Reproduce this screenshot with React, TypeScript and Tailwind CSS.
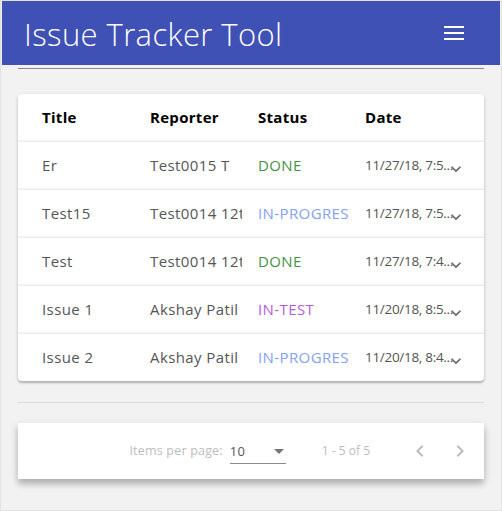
import React from "react";

const rows = [
  { title: "Er", reporter: "Test0015 T", status: "DONE", date: "11/27/18, 7:5..." },
  { title: "Test15", reporter: "Test0014 12test", status: "IN-PROGRESS", date: "11/27/18, 7:5..." },
  { title: "Test", reporter: "Test0014 12test", status: "DONE", date: "11/27/18, 7:4..." },
  { title: "Issue 1", reporter: "Akshay Patil", status: "IN-TEST", date: "11/20/18, 8:5..." },
  { title: "Issue 2", reporter: "Akshay Patil", status: "IN-PROGRESS", date: "11/20/18, 8:4..." },
];

function statusClass(s: string) {
  if (s === "DONE") return "text-[#449444]";
  if (s === "IN-TEST") return "text-[#b15ddb]";
  return "text-[#86a2f2]";
}

function Chevron() {
  return (
    <svg width="20" height="20" viewBox="0 0 24 24" className="shrink-0 mt-[7px]">
      <path d="M7.41 8.59 12 13.17l4.59-4.58L18 10l-6 6-6-6z" fill="#666" />
    </svg>
  );
}

export default function App() {
  return (
    <div
      className="w-[502px] h-[511px] bg-[#f2f2f2] border border-[#e2e2e2] pl-[1px] pr-[1px] overflow-hidden"
      style={{ fontFamily: "'Open Sans', 'DejaVu Sans', sans-serif" }}
    >
      <div className="h-[64px] bg-[#3f51b5] flex items-center justify-between pl-[22px] pr-[36px]">
        <span className="text-white text-[31px] font-light leading-none tracking-[0.4px] mt-[2px]">Issue Tracker Tool</span>
        <svg width="20" height="14" viewBox="0 0 20 14">
          <rect x="0" y="0" width="20" height="2" fill="#fff" />
          <rect x="0" y="6" width="20" height="2" fill="#fff" />
          <rect x="0" y="12" width="20" height="2" fill="#fff" />
        </svg>
      </div>
      <div className="mx-[16px] mt-[3px] h-[1px] bg-[#8a8a8a]" />
      <div className="mx-[16px] mt-[25px] bg-white rounded-[4px] shadow-[0_2px_2px_rgba(0,0,0,0.2),0_1px_4px_rgba(0,0,0,0.12)]">
        <div className="h-[47px] flex items-center pl-[24px] text-[15px] tracking-[0.3px] font-bold text-black">
          <div className="w-[108px]">Title</div>
          <div className="w-[108px]">Reporter</div>
          <div className="w-[107px]">Status</div>
          <div className="w-[100px]">Date</div>
        </div>
        {rows.map((r, i) => (
          <div
            key={i}
            className="h-[48px] flex items-center pl-[24px] pr-[18px] text-[15px] tracking-[0.4px] border-t border-[#ececec] shadow-[0_-1px_1px_rgba(0,0,0,0.04)]"
          >
            <div className="w-[108px] shrink-0 text-[#555] whitespace-nowrap overflow-hidden">{r.title}</div>
            <div className="w-[92px] shrink-0 mr-[16px] text-[#555] whitespace-nowrap overflow-hidden">{r.reporter}</div>
            <div className="w-[91px] shrink-0 mr-[16px] whitespace-nowrap overflow-hidden">
              <span className={statusClass(r.status)}>{r.status}</span>
            </div>
            <div className="flex-1 min-w-0 text-[#555] whitespace-nowrap tracking-[-0.3px] text-[13.5px]">{r.date}</div>
            <Chevron />
          </div>
        ))}
      </div>
      <div className="mx-[16px] mt-[21px] h-[1px] bg-[#dcdcdc]" />
      <div className="mx-[16px] mt-[20px] h-[56px] bg-white shadow-[0_5px_6px_rgba(0,0,0,0.2),0_3px_10px_rgba(0,0,0,0.12)] flex items-center justify-end pr-[12px] text-[12.5px] tracking-[0.2px] text-[#bdbdbd]">
        <span className="mr-[7px]">Items per page:</span>
        <div className="w-[56px] h-[24px] border-b border-[#8a8a8a] flex items-center justify-between mt-[2px]">
          <span className="text-[#555] text-[13px]">10</span>
          <svg width="10" height="5" viewBox="0 0 10 5" className="mr-[2px]">
            <path d="M0 0 L10 0 L5 5 Z" fill="#777" />
          </svg>
        </div>
        <span className="ml-[36px] mr-[38px] text-[12px] tracking-[0px]">1 - 5 of 5</span>
        <svg width="24" height="24" viewBox="0 0 24 24" className="mr-[16px]">
          <path d="M15.41 7.41 14 6l-6 6 6 6 1.41-1.41L10.83 12z" fill="#bdbdbd" />
        </svg>
        <svg width="24" height="24" viewBox="0 0 24 24">
          <path d="M10 6 8.59 7.41 13.17 12l-4.58 4.59L10 18l6-6z" fill="#bdbdbd" />
        </svg>
      </div>
    </div>
  );
}
